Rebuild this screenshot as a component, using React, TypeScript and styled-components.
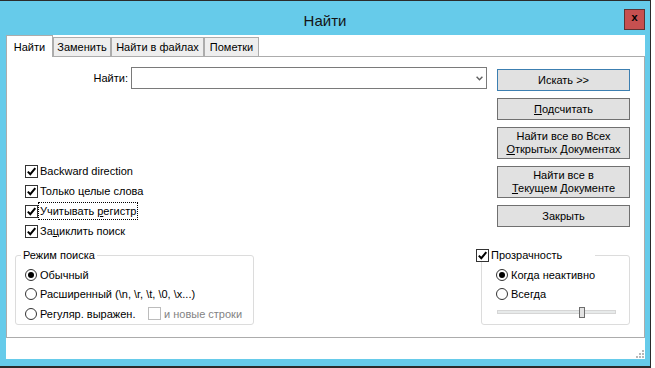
import React from "react";
import styled, { createGlobalStyle } from "styled-components";

const GlobalStyle = createGlobalStyle`
  *, *::before, *::after { box-sizing: border-box; }
  html, body { margin: 0; padding: 0; background: #ffffff; }
  body {
    font-family: "Liberation Sans", Arial, sans-serif;
    font-size: 11px;
    color: #000;
  }
`;

const Window = styled.div`
  width: 651px;
  height: 368px;
  display: flex;
  flex-direction: column;
  background: #66cbea;
  border-top: 1px solid #2b2b2b;
  border-right: 1px solid #2b2b2b;
  border-bottom: 2px solid #2b2b2b;
  padding-bottom: 7px;
`;

const TitleBar = styled.div`
  height: 34px;
  flex: none;
  display: grid;
  grid-template-columns: 1fr auto 1fr;
`;

const Title = styled.div`
  grid-column: 2;
  align-self: center;
  padding-top: 4px;
  font-size: 15px;
  color: #141414;
`;

const CloseButton = styled.div`
  grid-column: 3;
  justify-self: end;
  margin: 8px 5px 0 0;
  width: 21px;
  height: 21px;
  background: #c75050;
  border: 1px solid #5e3333;
  display: flex;
  align-items: center;
  justify-content: center;
  font: bold 11px "Liberation Mono", monospace;
  line-height: 1;
  padding-bottom: 2px;
`;

const Client = styled.div`
  flex: 1;
  margin: 0 5px 0 6px;
  background: #ffffff;
  display: flex;
  flex-direction: column;
`;

const TabStrip = styled.div`
  height: 21px;
  flex: none;
  display: flex;
  align-items: flex-end;
`;

const Tab = styled.div<{ $active?: boolean; $w: number }>`
  width: ${(p) => p.$w}px;
  height: ${(p) => (p.$active ? 22 : 19)}px;
  margin-bottom: ${(p) => (p.$active ? -1 : 0)}px;
  position: ${(p) => (p.$active ? "relative" : "static")};
  z-index: ${(p) => (p.$active ? 1 : "auto")};
  background: ${(p) => (p.$active ? "#ffffff" : "#eeeeee")};
  border: 1px solid #acacac;
  border-bottom: none;
  display: flex;
  align-items: center;
  justify-content: center;
  white-space: nowrap;
`;

const Panel = styled.div`
  height: 282px;
  flex: none;
  border: 1px solid #acacac;
  display: flex;
  flex-direction: column;
`;

const TopSection = styled.div`
  display: flex;
  gap: 10px;
  padding: 10px 14px 0 8px;
`;

const FindArea = styled.div`
  flex: 1;
  min-width: 0;
  display: flex;
  flex-direction: column;
`;

const FindRow = styled.div`
  display: flex;
  align-items: center;
  gap: 3px;
  height: 22px;
`;

const FieldLabel = styled.label`
  width: 113px;
  text-align: right;
`;

const Combo = styled.div`
  flex: 1;
  height: 22px;
  border: 1px solid #7a7a7a;
  background: #ffffff;
  display: flex;
  align-items: center;
  justify-content: flex-end;
  padding-right: 3px;
`;

const Options = styled.div`
  margin-top: 72px;
  padding-left: 10px;
  display: flex;
  flex-direction: column;
`;

const Row = styled.div<{ $h: number; $gap?: number }>`
  height: ${(p) => p.$h}px;
  display: flex;
  align-items: center;
  gap: ${(p) => p.$gap ?? 1}px;
  white-space: nowrap;
`;

const BoxWrap = styled.span<{ $disabled?: boolean }>`
  width: 13px;
  height: 13px;
  flex: none;
  border: 1px solid ${(p) => (p.$disabled ? "#bcbcbc" : "#333333")};
  background: #ffffff;
  display: inline-flex;
  align-items: center;
  justify-content: center;
`;

const Label = styled.span<{ $focus?: boolean; $disabled?: boolean; $w?: number }>`
  padding: 1px 1px;
  line-height: 14px;
  color: ${(p) => (p.$disabled ? "#838383" : "#000000")};
  outline: ${(p) => (p.$focus ? "1px dotted #000000" : "none")};
  ${(p) => (p.$w ? `width: ${p.$w}px;` : "")}
`;

const Key = styled.span`
  text-decoration: underline;
  text-underline-offset: 1px;
`;

const RadioCircle = styled.span<{ $on?: boolean }>`
  width: 12px;
  height: 12px;
  flex: none;
  border-radius: 50%;
  border: 1px solid #333333;
  background: #ffffff;
  display: inline-flex;
  align-items: center;
  justify-content: center;
  &::after {
    content: "";
    width: 6px;
    height: 6px;
    border-radius: 50%;
    background: ${(p) => (p.$on ? "#000000" : "transparent")};
  }
`;

const ButtonColumn = styled.div`
  width: 133px;
  flex: none;
  margin-top: 2px;
  display: flex;
  flex-direction: column;
  gap: 7px;
`;

const Button = styled.div<{ $h: number; $default?: boolean }>`
  height: ${(p) => p.$h}px;
  background: #e1e1e1;
  border: 1px solid ${(p) => (p.$default ? "#3c7fb1" : "#707070")};
  display: flex;
  flex-direction: column;
  align-items: center;
  justify-content: center;
  line-height: 13px;
  text-align: center;
  white-space: nowrap;
`;

const BottomSection = styled.div`
  margin-top: auto;
  padding: 0 14px 12px 8px;
  display: flex;
  justify-content: space-between;
  align-items: flex-end;
`;

const Group = styled.fieldset<{ $w: number }>`
  width: ${(p) => p.$w}px;
  height: 77px;
  margin: 0;
  padding: 0;
  min-width: 0;
  border: 1px solid #dcdcdc;
  border-radius: 3px;
`;

const GroupLegend = styled.legend<{ $offset: number; $w?: number }>`
  margin-left: ${(p) => p.$offset}px;
  padding: ${(p) => (p.$w ? "0" : "0 2px")};
  height: 14px;
  line-height: 14px;
  ${(p) => (p.$w ? `width: ${p.$w}px;` : "")}
  display: flex;
  align-items: center;
  gap: 1px;
  white-space: nowrap;
`;

const GroupBody = styled.div<{ $left: number }>`
  padding: 3px 0 0 ${(p) => p.$left}px;
  display: flex;
  flex-direction: column;
`;

const SliderRow = styled.div`
  height: 16px;
  display: flex;
  align-items: center;
  padding-left: 1px;
`;

const Track = styled.div`
  position: relative;
  width: 119px;
  height: 4px;
  background: #e7eaea;
  border: 1px solid #d6d6d6;
`;

const Thumb = styled.span`
  position: absolute;
  top: -4px;
  width: 6px;
  height: 11px;
  background: #e3e3e3;
  border: 1px solid #6d6d6d;
`;

const StatusBar = styled.div`
  flex: 1;
  display: flex;
  justify-content: flex-end;
  align-items: flex-end;
  padding: 0 1px 1px 0;
`;

const CheckBox = ({ checked, disabled }: { checked?: boolean; disabled?: boolean }) => (
  <BoxWrap $disabled={disabled}>
    {checked && (
      <svg width="11" height="11" viewBox="0 0 11 11">
        <path d="M1.8 5.6 L4.3 8.2 L9.3 2.2" fill="none" stroke="#000" strokeWidth="2" />
      </svg>
    )}
  </BoxWrap>
);

const Chevron = () => (
  <svg width="7" height="5" viewBox="0 0 7 5">
    <path d="M0.6 0.8 L3.5 3.8 L6.4 0.8" fill="none" stroke="#606060" strokeWidth="1.4" />
  </svg>
);

const Grip = () => (
  <svg width="8" height="8" viewBox="0 0 8 8">
    {[
      [6, 0],
      [3, 3],
      [6, 3],
      [0, 6],
      [3, 6],
      [6, 6],
    ].map(([x, y]) => (
      <rect key={`${x}-${y}`} x={x} y={y} width="2" height="2" fill="#b8b8b8" />
    ))}
  </svg>
);

const opacity = 73;

export default function App() {
  const thumbLeft = Math.round((opacity / 100) * (117 - 6));
  return (
    <>
      <GlobalStyle />
      <Window>
        <TitleBar>
          <Title>Найти</Title>
          <CloseButton>x</CloseButton>
        </TitleBar>
        <Client>
          <TabStrip>
            <Tab $active $w={47}>Найти</Tab>
            <Tab $w={58}>Заменить</Tab>
            <Tab $w={93}>Найти в файлах</Tab>
            <Tab $w={55}>Пометки</Tab>
          </TabStrip>
          <Panel>
            <TopSection>
              <FindArea>
                <FindRow>
                  <FieldLabel>Найти:</FieldLabel>
                  <Combo>
                    <Chevron />
                  </Combo>
                </FindRow>
                <Options>
                  <Row $h={20}>
                    <CheckBox checked />
                    <Label>Backward direction</Label>
                  </Row>
                  <Row $h={20}>
                    <CheckBox checked />
                    <Label>Только целые слова</Label>
                  </Row>
                  <Row $h={20}>
                    <CheckBox checked />
                    <Label $focus>
                      Учитывать <Key>р</Key>егистр
                    </Label>
                  </Row>
                  <Row $h={20}>
                    <CheckBox checked />
                    <Label>
                      За<Key>ц</Key>иклить поиск
                    </Label>
                  </Row>
                </Options>
              </FindArea>
              <ButtonColumn>
                <Button $h={22} $default>
                  Искать &gt;&gt;
                </Button>
                <Button $h={22}>
                  <span>
                    <Key>П</Key>одсчитать
                  </span>
                </Button>
                <Button $h={32}>
                  <span>Найти все во Всех</span>
                  <span>
                    <Key>О</Key>ткрытых Документах
                  </span>
                </Button>
                <Button $h={32}>
                  <span>Найти все в</span>
                  <span>
                    <Key>Т</Key>екущем Документе
                  </span>
                </Button>
                <Button $h={22}>Закрыть</Button>
              </ButtonColumn>
            </TopSection>
            <BottomSection>
              <Group $w={239}>
                <GroupLegend $offset={5}>Режим поиска</GroupLegend>
                <GroupBody $left={9}>
                  <Row $h={19.5} $gap={2}>
                    <RadioCircle $on />
                    <Label>Обычный</Label>
                  </Row>
                  <Row $h={19.5} $gap={2}>
                    <RadioCircle />
                    <Label>Расширенный (\n, \r, \t, \0, \x...)</Label>
                  </Row>
                  <Row $h={19.5} $gap={2}>
                    <RadioCircle />
                    <Label $w={107}>Регуляр. выражен.</Label>
                    <CheckBox disabled />
                    <Label $disabled>и новые строки</Label>
                  </Row>
                </GroupBody>
              </Group>
              <Group $w={149}>
                <GroupLegend $offset={-6} $w={119}>
                  <CheckBox checked />
                  <Label>Прозрачность</Label>
                </GroupLegend>
                <GroupBody $left={14}>
                  <Row $h={19.5} $gap={2}>
                    <RadioCircle $on />
                    <Label>Когда неактивно</Label>
                  </Row>
                  <Row $h={19.5} $gap={2}>
                    <RadioCircle />
                    <Label>Всегда</Label>
                  </Row>
                  <SliderRow>
                    <Track>
                      <Thumb style={{ left: thumbLeft }} />
                    </Track>
                  </SliderRow>
                </GroupBody>
              </Group>
            </BottomSection>
          </Panel>
          <StatusBar>
            <Grip />
          </StatusBar>
        </Client>
      </Window>
    </>
  );
}
